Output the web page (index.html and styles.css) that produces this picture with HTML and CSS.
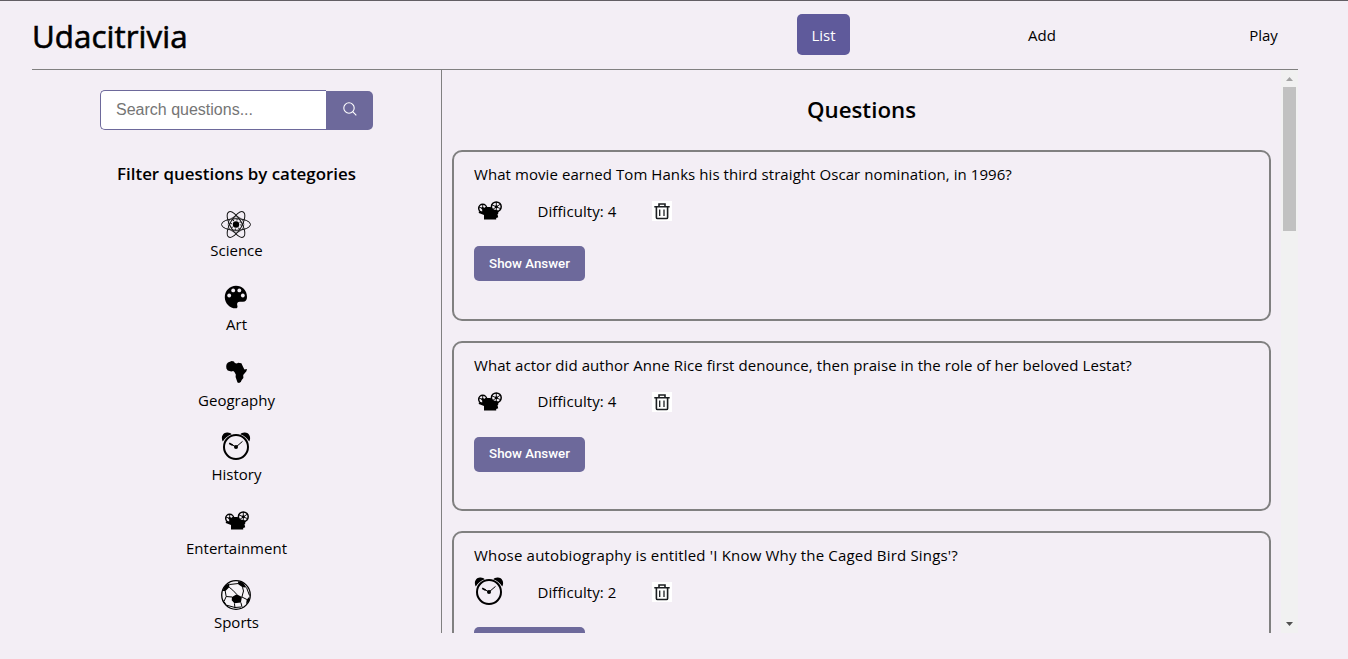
FILE: index.html
```
<!DOCTYPE html>
<html lang="en">
<head>
<meta charset="utf-8">
<title>Udacitrivia</title>
<link rel="stylesheet" href="styles.css">
</head>
<body>
<svg class="sprite" aria-hidden="true">
  <symbol id="science" viewBox="0 0 30 30">
    <g fill="none" stroke="#111" stroke-width="1">
      <ellipse cx="15" cy="15.500" rx="14.500" ry="5.800"/>
      <ellipse cx="15" cy="15.500" rx="14.500" ry="5.800" transform="rotate(60 15 15.500)"/>
      <ellipse cx="15" cy="15.500" rx="14.500" ry="5.800" transform="rotate(120 15 15.500)"/>
      <circle cx="15" cy="15.500" r="4.800" stroke-width="1.400" stroke-dasharray="1 2.770"/>
      <circle cx="15" cy="15.500" r="7.800" stroke-width=".6"/>
    </g>
    <circle cx="15" cy="15.500" r="3.200"/>
  </symbol>
  <symbol id="art" viewBox="0 1 30 30">
    <path d="M15 3.800C8.600 3.800 3.800 9 3.800 15.200c0 6.200 5 11.100 10.800 11.100 1.900 0 2.200-1.400 1.700-2.900-.7-2.300 .3-3.700 2.500-3.700h3.200c2.600 0 4-2 4-4.800C26 8.200 21 3.800 15 3.800z"/>
    <g fill="#f3eef5"><circle cx="12.200" cy="8.400" r="1.900"/><circle cx="18.300" cy="8.400" r="1.900"/><circle cx="8.200" cy="13.500" r="1.900"/><circle cx="21.800" cy="13.500" r="1.900"/></g>
  </symbol>
  <symbol id="geography" viewBox="0 0 30 30">
    <path d="M7 5.500l3.700-1.500 2.300.6.800 1.400 2.100.6 1.200-.8 3.300.4 1.500 3.200 1.500 3.100 2.600-.4-.6 2.200-3.200 3.600.2 3-1.700 2.200-.9 2-1.800.8-1.500-.5-1.900-5.400.2-2.600-1.400-2.400-1.200-1-1.900.4-3.600-.8-1.300-2-.2-2.600.5-2z"/>
  </symbol>
  <symbol id="history" viewBox="0 1 30 30">
    <path d="M1.800 10.500C-.4 6.800 1.500 1.700 6 1.500c2-.2 3.800.6 4.700 1.800C6.600 4.800 3.700 7.200 1.800 10.500zM28.200 10.500c2.200-3.700.3-8.800-4.200-9-2-.2-3.800.6-4.700 1.800 4.100 1.500 7 3.900 8.900 7.200z"/>
    <circle cx="15" cy="16" r="12" fill="none" stroke="#000" stroke-width="2"/>
    <path d="M8.200 12.200L11.800 14.200" stroke="#000" stroke-width="1.700"/>
    <path d="M11.500 14L15 16l6.500-5.600" fill="none" stroke="#000" stroke-width="1"/>
    <circle cx="15" cy="16" r="2"/>
  </symbol>
  <symbol id="entertainment" viewBox="0 0 30 30">
    <g fill="none" stroke="#000" stroke-width="1.500">
      <circle cx="8.700" cy="12.300" r="4"/><circle cx="22.300" cy="10.800" r="4.900"/>
      <path d="M8.700 8.300v8M5 11l7.500 3M22.300 6v10M17.800 8.800l9 4M26.500 8l-8 5.600" stroke-width=".9"/>
    </g>
    <circle cx="22.300" cy="10.800" r="1.500"/><circle cx="8.700" cy="12.300" r="1.300"/>
    <path d="M8.500 13l3-2h5l3.300 2.500 4.500 1v3l-.8.700.7 3-2 .7v1.700H10v-4.500l-5.200-2.200v-1.300l4 .3z"/>
  </symbol>
  <symbol id="sports" viewBox="0 0 30 30">
    <circle cx="15" cy="15" r="14.300" fill="#f6f3f7" stroke="#000" stroke-width="1.300"/>
    <path d="M11 17l4.700-2.700 5.200 2.700-1 5.500-6.500.8-2.700-3zM1.500 11L4 5.500l4.500-2.300-.3 4L4.500 11zM17 1.200l5 1.300 3.500 5-4-.3-4.300-3zM1.300 19.500l2.500 2.500 2.500 4-3-2.500zM28.500 16.500l-.7 5-2.800 2.700.7-4.500z"/>
    <path d="M8.200 7.200l3.600 3L15.700 14.300M8.500 4.500l9-1M21.500 7.200L22.500 11l-1.600 6M20.900 17l5 2.500M25.500 7.500l3 8M19.900 22.500L21 27M13.400 23.300L14 28M4.200 11l1 5.500L11 17M5.200 16.500l-2 4.500M6 25.300l8 2.200 6-.5" fill="none" stroke="#000" stroke-width="1"/>
  </symbol>
  <symbol id="trash" viewBox="0 0 20 20">
    <path d="M0 0h20v20H0z" fill="#fff"/>
    <path d="M2.300 5.800h15.400M7 5.500V3h6v2.500M4.400 6v10.400c0 .7.4 1.100 1.100 1.100h9c.7 0 1.100-.4 1.100-1.100V6" fill="none" stroke="#1c1f22" stroke-width="1.600"/>
    <path d="M7.700 8.500V15M12 8.500V15" stroke="#1c1f22" stroke-width="1.300"/>
  </symbol>
</svg>
<div class="page">
  <header class="header">
    <h1 class="brand">Udacitrivia</h1>
    <nav class="nav">
      <a class="nav-link active">List</a>
      <a class="nav-link">Add</a>
      <a class="nav-link">Play</a>
    </nav>
  </header>
  <div class="content">
    <aside class="sidebar">
      <form class="search">
        <input class="search-input" type="text" placeholder="Search questions...">
        <button class="search-button" type="button" aria-label="Search">
          <svg width="14" height="14" viewBox="0 0 14 14" fill="none" stroke="#fff" stroke-width="1.100"><circle cx="6" cy="6" r="5.200"/><path d="M9.700 9.700l3.600 3.600"/></svg>
        </button>
      </form>
      <h2 class="filter-title">Filter questions by categories</h2>
      <ul class="categories">
        <li class="category"><svg class="icon"><use href="#science"/></svg><span>Science</span></li>
        <li class="category"><svg class="icon"><use href="#art"/></svg><span>Art</span></li>
        <li class="category low"><svg class="icon"><use href="#geography"/></svg><span>Geography</span></li>
        <li class="category raised"><svg class="icon"><use href="#history"/></svg><span>History</span></li>
        <li class="category raised"><svg class="icon"><use href="#entertainment"/></svg><span>Entertainment</span></li>
        <li class="category raised"><svg class="icon"><use href="#sports"/></svg><span>Sports</span></li>
      </ul>
    </aside>
    <main class="main">
      <div class="questions">
        <h2 class="questions-title">Questions</h2>
        <article class="card">
          <p class="question">What movie earned Tom Hanks his third straight Oscar nomination, in 1996?</p>
          <div class="meta"><svg class="icon"><use href="#entertainment"/></svg><span class="difficulty">Difficulty: 4</span><svg class="trash"><use href="#trash"/></svg></div>
          <button class="answer" type="button">Show Answer</button>
        </article>
        <article class="card">
          <p class="question">What actor did author Anne Rice first denounce, then praise in the role of her beloved Lestat?</p>
          <div class="meta"><svg class="icon"><use href="#entertainment"/></svg><span class="difficulty">Difficulty: 4</span><svg class="trash"><use href="#trash"/></svg></div>
          <button class="answer" type="button">Show Answer</button>
        </article>
        <article class="card">
          <p class="question loose">Whose autobiography is entitled 'I Know Why the Caged Bird Sings'?</p>
          <div class="meta"><svg class="icon"><use href="#history"/></svg><span class="difficulty">Difficulty: 2</span><svg class="trash"><use href="#trash"/></svg></div>
          <button class="answer" type="button">Show Answer</button>
        </article>
      </div>
      <div class="scrollbar">
        <svg width="7" height="4" viewBox="0 0 7 4"><path d="M0 4L3.500 0 7 4z" fill="#a3a3a3"/></svg>
        <div class="thumb"></div>
        <svg class="down" width="7" height="4" viewBox="0 0 7 4"><path d="M0 0h7L3.500 4z" fill="#505050"/></svg>
      </div>
    </main>
  </div>
</div>
</body>
</html>
```
FILE: styles.css
```
* { box-sizing: border-box; }
body {
  margin: 0;
  background: #f3eef5;
  color: #000;
  font: 400 15px/21px "Open Sans", "Noto Sans", sans-serif;
}
.sprite { display: none; }
.page {
  height: 659px;
  overflow: hidden;
  border-top: 1px solid #625e64;
  padding: 0 50px 0 32px;
}
.header {
  display: flex;
  justify-content: space-between;
  height: 69px;
  border-bottom: 1px solid #808080;
}
.brand {
  margin: 0;
  padding-top: 14px;
  font-size: 31.3px;
  line-height: 43px;
  font-weight: 400;
  letter-spacing: .05px;
  -webkit-text-stroke: .6px #000;
}
.nav {
  display: flex;
  justify-content: space-between;
  align-items: flex-start;
  width: 496px;
  margin-right: 5px;
  padding-top: 13px;
}
.nav-link {
  padding: 11px 0 9px;
  width: 59px;
  height: 41px;
  text-align: center;
  border-radius: 5px;
}
.nav-link.active { width: 53px; background: #5f5a9b; color: #fff; }
.content { display: flex; height: 563px; }
.sidebar { width: 410px; border-right: 1px solid #808080; overflow: hidden; }
.search { display: flex; justify-content: center; padding: 20px 0 0; }
.search-input {
  width: 226px;
  height: 40px;
  border: 1px solid #6d699b;
  border-right: 0;
  border-radius: 5px 0 0 5px;
  padding: 0 15px;
  background: #fff;
  font: 16px "Liberation Sans", Arial, sans-serif;
}
.search-input::placeholder { color: #757575; opacity: 1; }
.search-button {
  width: 47px;
  height: 39px;
  margin-top: 1px;
  padding: 0 0 3px;
  border: 0;
  border-radius: 0 5px 5px 0;
  background: #6d699b;
  display: flex;
  align-items: center;
  justify-content: center;
}
.filter-title {
  margin: 33px 0 0;
  text-align: center;
  font-size: 16.9px;
  line-height: 22px;
  font-weight: 600;
}
.categories { list-style: none; margin: 24px 0 0; padding: 0; }
.category {
  display: flex;
  flex-direction: column;
  align-items: center;
  height: 74px;
  gap: 1px;
}
.category.low { height: 76px; }
.category.low span { padding-top: 2px; }
.category.low + .raised, .category.raised { gap: 2px; }
.category.raised .icon { margin-top: -1px; }
.category .icon { margin-right: 1px; }
.icon { width: 30px; height: 30px; flex: none; }
.main { flex: 1; display: flex; }
.questions { width: 839px; padding: 0 10px; overflow: hidden; }
.questions-title {
  margin: 0;
  padding-top: 23px;
  height: 80.3px;
  text-align: center;
  font-size: 22.3px;
  line-height: 34px;
  font-weight: 600;
}
.card {
  height: 170.4px;
  margin-bottom: 20px;
  border: 2px solid #808080;
  border-radius: 10px;
  padding: 12px 20px 0;
}
.question { margin: 0; height: 21px; white-space: nowrap; letter-spacing: .07px; }
.question.loose { letter-spacing: .18px; }
.meta { display: flex; align-items: center; height: 30px; margin-top: 11px; }
.difficulty { width: 114.5px; margin-left: 33.5px; letter-spacing: .07px; }
.trash { width: 20px; height: 20px; }
.answer {
  display: block;
  width: 111px;
  height: 35px;
  margin-top: 20px;
  padding: 0 0 1px;
  border: 0;
  border-radius: 5px;
  background: #6d699b;
  color: #fff;
  font: 500 13.3px Roboto, "Liberation Sans", sans-serif;
}
.scrollbar {
  width: 17px;
  background: #f1f1f1;
  display: flex;
  flex-direction: column;
  align-items: center;
  padding-top: 7px;
}
.thumb { width: 13px; height: 144px; margin-top: 6px; background: #c1c1c1; }
.down { margin-top: auto; margin-bottom: 7px; }
```
